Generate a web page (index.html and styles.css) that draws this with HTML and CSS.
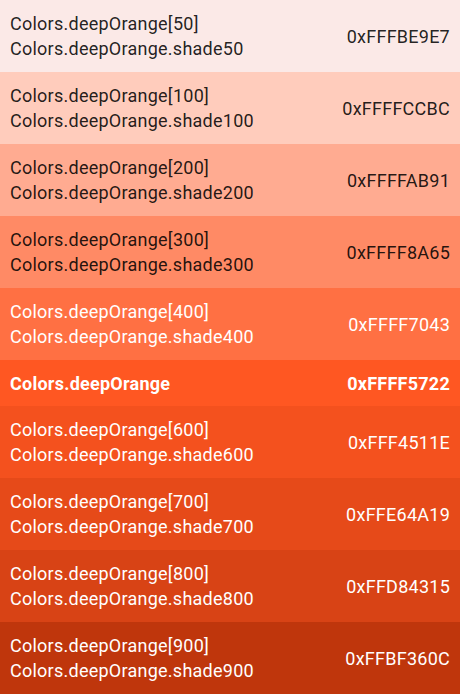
FILE: index.html
```html
<!DOCTYPE html>
<html lang="en">
<head>
    <meta charset="UTF-8">
    <meta name="viewport" content="width=device-width, initial-scale=1.0">
    <title>Deep Orange Swatches</title>
    <link rel="stylesheet" href="styles.css">
</head>
<body>
    <div class="swatch-list">
        <div class="swatch shade-50 dark-text">
            <div class="names"><span>Colors.deepOrange[50]</span><span>Colors.deepOrange.shade50</span></div>
            <span class="hex">0xFFFBE9E7</span>
        </div>
        <div class="swatch shade-100 dark-text">
            <div class="names"><span>Colors.deepOrange[100]</span><span>Colors.deepOrange.shade100</span></div>
            <span class="hex">0xFFFFCCBC</span>
        </div>
        <div class="swatch shade-200 dark-text">
            <div class="names"><span>Colors.deepOrange[200]</span><span>Colors.deepOrange.shade200</span></div>
            <span class="hex">0xFFFFAB91</span>
        </div>
        <div class="swatch shade-300 dark-text">
            <div class="names"><span>Colors.deepOrange[300]</span><span>Colors.deepOrange.shade300</span></div>
            <span class="hex">0xFFFF8A65</span>
        </div>
        <div class="swatch shade-400">
            <div class="names"><span>Colors.deepOrange[400]</span><span>Colors.deepOrange.shade400</span></div>
            <span class="hex">0xFFFF7043</span>
        </div>
        <div class="swatch primary shade-500">
            <div class="names"><span>Colors.deepOrange</span></div>
            <span class="hex">0xFFFF5722</span>
        </div>
        <div class="swatch shade-600">
            <div class="names"><span>Colors.deepOrange[600]</span><span>Colors.deepOrange.shade600</span></div>
            <span class="hex">0xFFF4511E</span>
        </div>
        <div class="swatch shade-700">
            <div class="names"><span>Colors.deepOrange[700]</span><span>Colors.deepOrange.shade700</span></div>
            <span class="hex">0xFFE64A19</span>
        </div>
        <div class="swatch shade-800">
            <div class="names"><span>Colors.deepOrange[800]</span><span>Colors.deepOrange.shade800</span></div>
            <span class="hex">0xFFD84315</span>
        </div>
        <div class="swatch shade-900">
            <div class="names"><span>Colors.deepOrange[900]</span><span>Colors.deepOrange.shade900</span></div>
            <span class="hex">0xFFBF360C</span>
        </div>
    </div>
</body>
</html>
```

FILE: styles.css
```css
body {
    margin: 0;
    font-family: Roboto, "Liberation Sans", sans-serif;
    background-color: #fafafa;
}
.swatch-list {
    display: flex;
    flex-direction: column;
}
.swatch {
    display: flex;
    align-items: center;
    justify-content: space-between;
    height: 72px;
    padding: 0 10px;
    box-sizing: border-box;
    font-size: 18px;
    line-height: 25px;
    letter-spacing: 0.25px;
    color: white;
}
.swatch .names {
    display: flex;
    flex-direction: column;
}
.dark-text {
    color: rgba(0, 0, 0, 0.87);
}
/* the primary shade is a shorter, bold row */
.swatch.primary {
    height: 46px;
    font-weight: bold;
}
.shade-50 { background-color: #fbe9e7; }
.shade-100 { background-color: #ffccbc; }
.shade-200 { background-color: #ffab91; }
.shade-300 { background-color: #ff8a65; }
.shade-400 { background-color: #ff7043; }
.shade-500 { background-color: #ff5722; }
.shade-600 { background-color: #f4511e; }
.shade-700 { background-color: #e64a19; }
.shade-800 { background-color: #d84315; }
.shade-900 { background-color: #bf360c; }
```
